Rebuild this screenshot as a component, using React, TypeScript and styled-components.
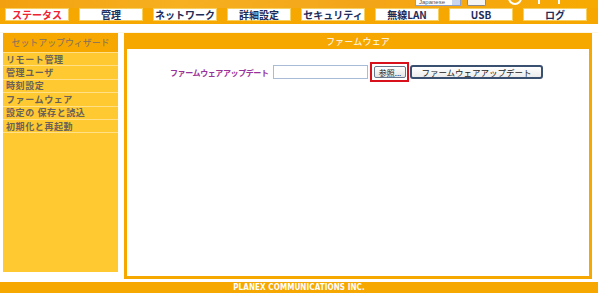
import React from 'react';
import styled, { createGlobalStyle } from 'styled-components';

const GlobalStyle = createGlobalStyle`
  body {
    margin: 0;
    background: #fff;
    font-family: "Noto Sans CJK JP", "Liberation Sans", sans-serif;
  }
`;

const Page = styled.div`
  width: 598px;
  height: 297px;
  overflow: hidden;
  background: #fff;
`;

const Header = styled.div`
  height: 24px;
  background: #f6a800;
  display: flex;
  flex-direction: column;
`;

const Banner = styled.div`
  height: 8px;
  display: flex;
  align-items: flex-start;
  overflow: hidden;
  background: linear-gradient(90deg, #f2a010 0%, #f6b020 30%, #f3a51a 60%, #f7aa00 100%);
`;

const LangSelect = styled.div`
  margin-left: 415px;
  width: 46px;
  height: 6px;
  background: #fff;
  border: 1px solid #8aa0c8;
  border-top: 0;
  font-family: "Liberation Sans", sans-serif;
  font-size: 6px;
  line-height: 5px;
  color: #555;
  padding-left: 3px;
  box-sizing: border-box;
  display: flex;
  justify-content: space-between;
`;

const SelectArrow = styled.span`
  width: 8px;
  height: 5px;
  background: #c8d6f0;
`;

const GoButton = styled.div`
  margin-left: 6px;
  width: 17px;
  height: 5px;
  background: #f4f4f4;
  border: 1px solid #8a8a8a;
  border-top: 0;
  border-radius: 0 0 2px 2px;
`;

const Ring = styled.div`
  margin-left: 22px;
  margin-top: -9px;
  width: 10px;
  height: 10px;
  border: 2px solid #fff;
  border-radius: 50%;
`;

const Mark = styled.div<{ $gap: number }>`
  margin-left: ${p => p.$gap}px;
  width: 2px;
  height: 4px;
  background: #fff;
`;

const NavRow = styled.div`
  display: flex;
  gap: 10px;
  padding-left: 5px;
`;

const NavButton = styled.div<{ $active?: boolean }>`
  width: 64px;
  height: 13px;
  box-sizing: border-box;
  background: #fff;
  border: 1px solid #f8d060;
  display: flex;
  align-items: center;
  justify-content: center;
  font-size: 10px;
  font-weight: bold;
  color: ${p => (p.$active ? '#ee2233' : '#1e2c58')};
  line-height: 1;
`;

const Gap = styled.div`
  height: 9px;
  border-bottom: 1px solid #fdf6e4;
  box-sizing: border-box;
`;

const Body = styled.div`
  display: flex;
  align-items: flex-start;
  gap: 6px;
  padding-left: 3px;
`;

const Sidebar = styled.div`
  width: 115px;
  height: 239px;
  background: #ffc932;
  display: flex;
  flex-direction: column;
`;

const SideTitle = styled.div`
  height: 19px;
  background: #f6a800;
  color: #7d6f62;
  font-size: 9px;
  letter-spacing: -0.1px;
  display: flex;
  align-items: center;
  justify-content: center;
`;

const SideItem = styled.div`
  height: 12.4px;
  border-top: 1px solid #ffe088;
  padding-left: 3px;
  font-size: 9px;
  font-weight: bold;
  letter-spacing: 0.6px;
  color: #6a6258;
  display: flex;
  align-items: center;
  white-space: nowrap;
`;

const Panel = styled.div`
  width: 468px;
  height: 246px;
  box-sizing: border-box;
  border: 3px solid #f6a800;
  border-top: 0;
  background: #fff;
  display: flex;
  flex-direction: column;
`;

const PanelTitle = styled.div`
  height: 16px;
  background: #f6a800;
  margin: 0 -3px;
  color: #fff;
  font-size: 9px;
  letter-spacing: 0.2px;
  display: flex;
  align-items: center;
  justify-content: center;
`;

const FormRow = styled.div`
  display: flex;
  align-items: center;
  margin-top: 13px;
  padding-left: 43px;
  height: 20px;
`;

const Label = styled.div`
  width: 98px;
  color: #993399;
  font-size: 8px;
  font-weight: bold;
  letter-spacing: -0.4px;
  margin-right: 5px;
  white-space: nowrap;
  text-align: right;
`;

const FileInput = styled.div`
  width: 95px;
  height: 14px;
  box-sizing: border-box;
  border: 1px solid #a8bcd8;
  background: #fff;
`;

const Highlight = styled.div`
  margin-left: 2px;
  padding: 2px 1px 2px 2px;
  border: 2px solid #d8101c;
  display: flex;
`;

const BrowseButton = styled.div`
  width: 32px;
  height: 12px;
  box-sizing: border-box;
  border: 1px solid #6a7890;
  border-radius: 2px;
  background: linear-gradient(#ffffff, #e4e4e4);
  font-size: 8px;
  color: #222;
  display: flex;
  align-items: center;
  justify-content: center;
`;

const UpdateButton = styled.div`
  margin-left: 1px;
  width: 133px;
  height: 14px;
  box-sizing: border-box;
  border: 2px solid #3a5070;
  border-radius: 3px;
  background: linear-gradient(#ffffff, #ececec);
  font-size: 8.5px;
  color: #222;
  display: flex;
  align-items: center;
  justify-content: center;
`;

const Footer = styled.div`
  margin-top: 3px;
  height: 11px;
  background: #f6a800;
  color: #fff;
  font-family: "DejaVu Sans Condensed", "Liberation Sans", sans-serif;
  font-weight: bold;
  font-size: 8px;
  display: flex;
  align-items: center;
  justify-content: center;
  letter-spacing: 0.1px;
`;

const navItems = ['ステータス', '管理', 'ネットワーク', '詳細設定', 'セキュリティ', '無線LAN', 'USB', 'ログ'];
const sideItems = ['リモート管理', '管理ユーザ', '時刻設定', 'ファームウェア', '設定の 保存と読込', '初期化と再起動'];

const App: React.FC = () => {
  return (
    <Page>
      <GlobalStyle />
      <Header>
        <Banner>
          <LangSelect>
            Japanese
            <SelectArrow />
          </LangSelect>
          <GoButton />
          <Ring />
          <Mark $gap={16} />
          <Mark $gap={18} />
        </Banner>
        <NavRow>
          {navItems.map((n, i) => (
            <NavButton key={n} $active={i === 0}>
              {n}
            </NavButton>
          ))}
        </NavRow>
      </Header>
      <Gap />
      <Body>
        <Sidebar>
          <SideTitle>セットアップウィザード</SideTitle>
          {sideItems.map(s => (
            <SideItem key={s}>{s}</SideItem>
          ))}
          <SideItem />
        </Sidebar>
        <Panel>
          <PanelTitle>ファームウェア</PanelTitle>
          <FormRow>
            <Label>ファームウェアアップデート</Label>
            <FileInput />
            <Highlight>
              <BrowseButton>参照...</BrowseButton>
            </Highlight>
            <UpdateButton>ファームウェアアップデート</UpdateButton>
          </FormRow>
        </Panel>
      </Body>
      <Footer>PLANEX COMMUNICATIONS INC.</Footer>
    </Page>
  );
};

export default App;
